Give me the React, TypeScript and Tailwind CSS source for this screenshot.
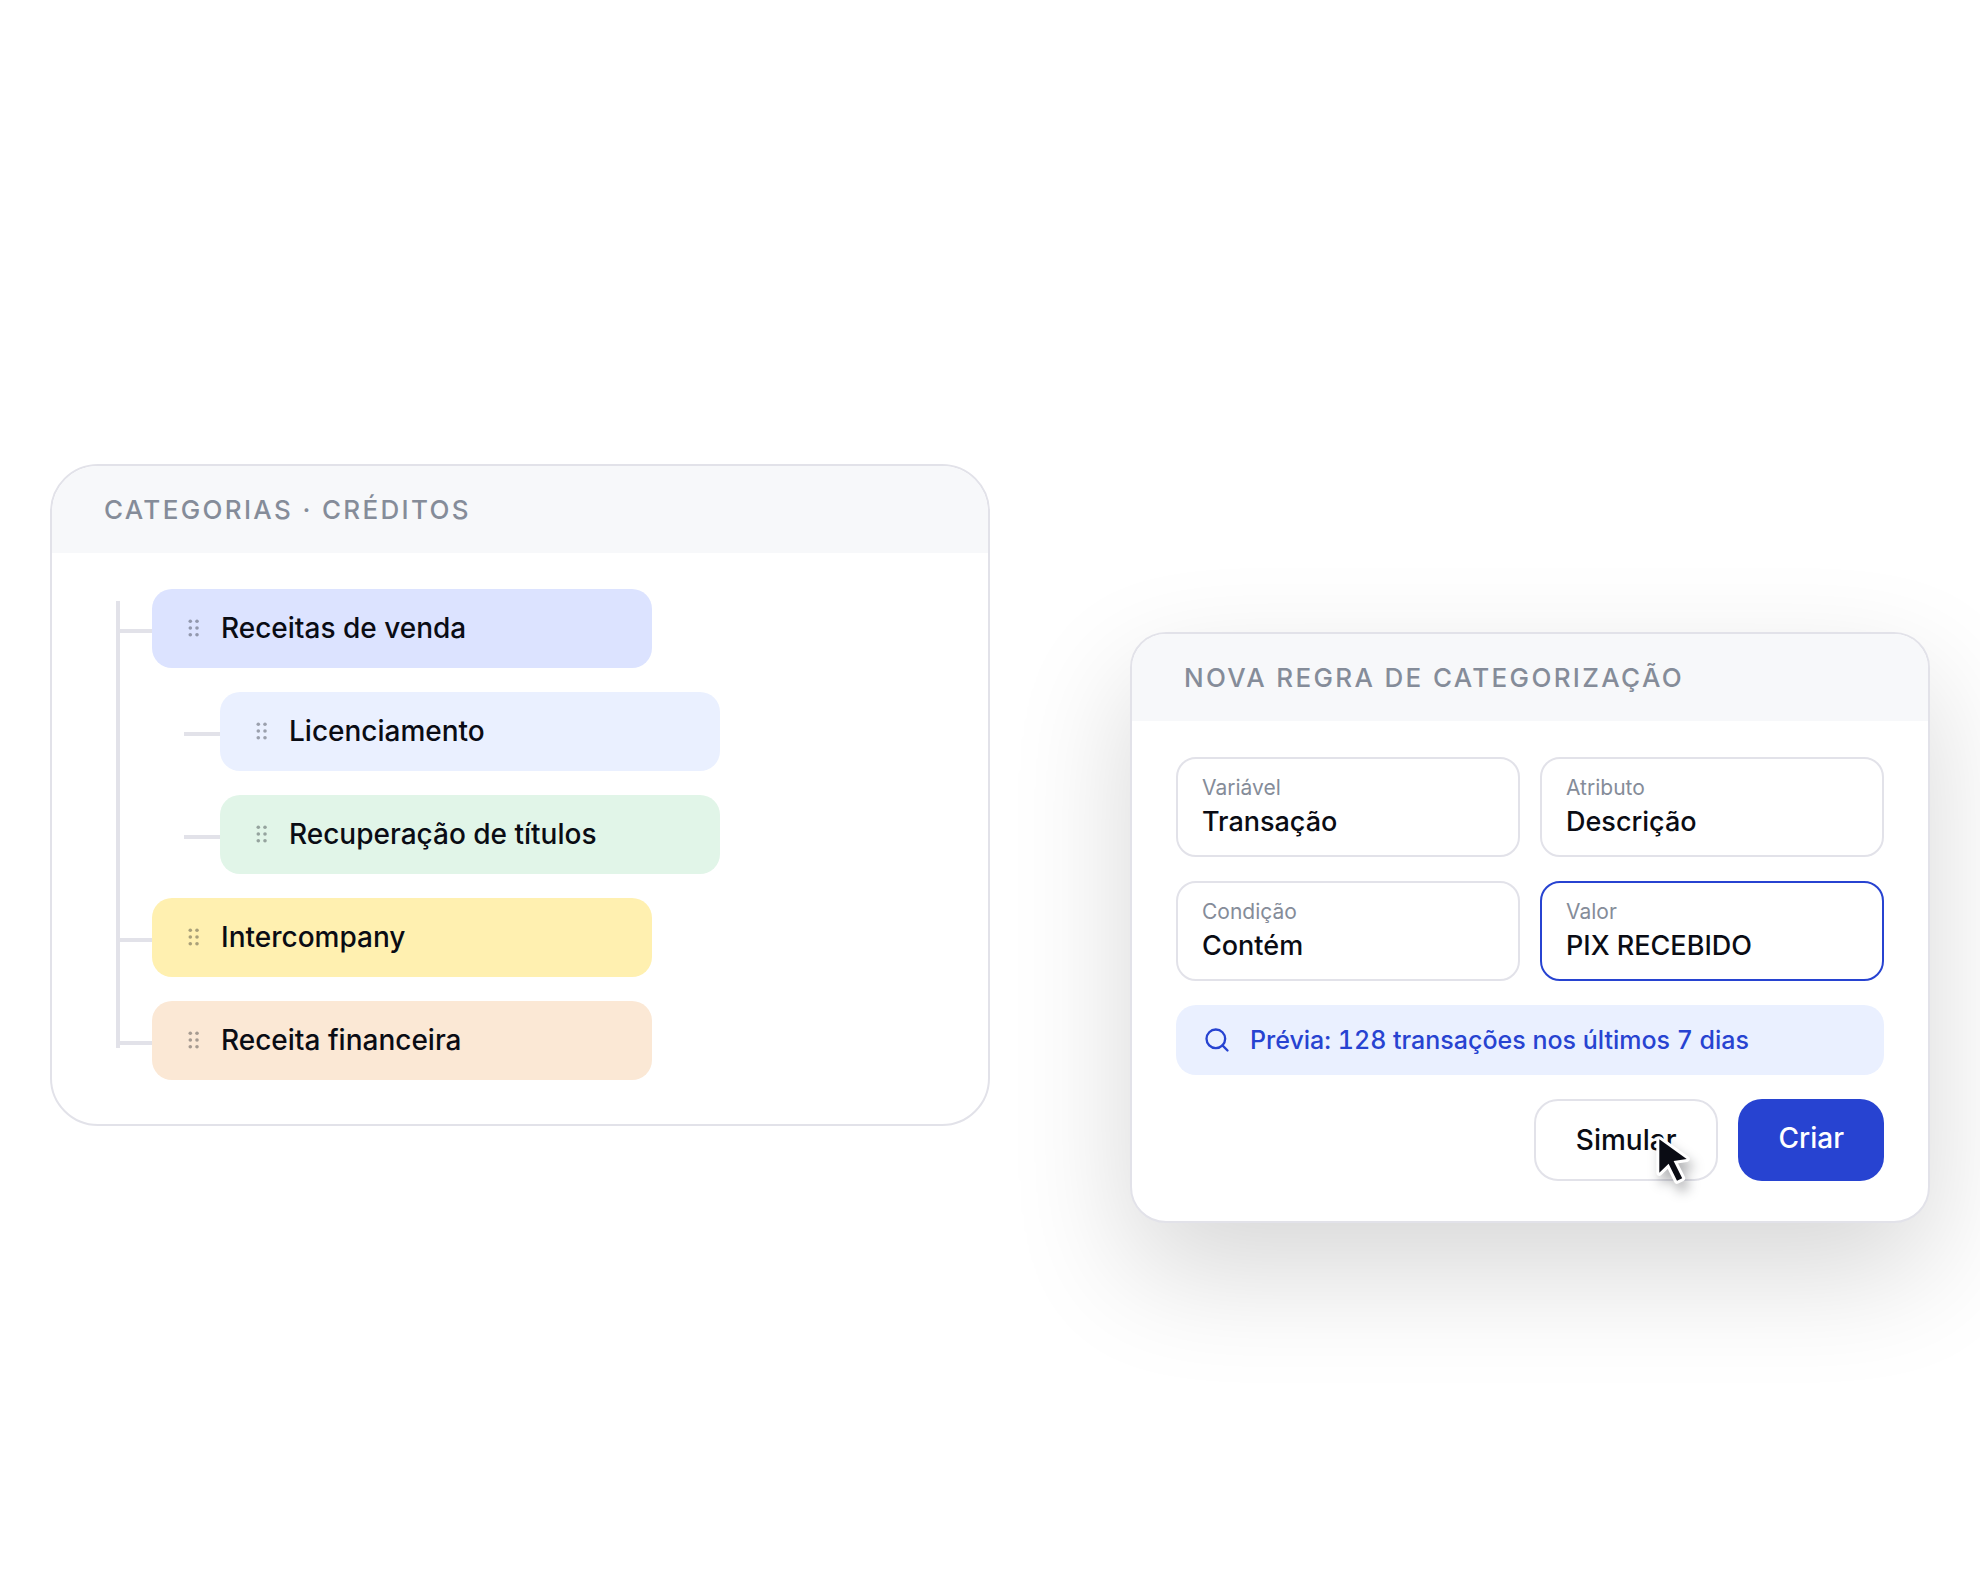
import React, { useState } from 'react';
import { Search } from 'lucide-react';
import { clsx } from 'clsx';

type Category = {
  name: string;
  color: string;
  children?: Category[];
};

const categories: Category[] = [
  {
    name: 'Receitas de venda',
    color: 'bg-[#dce3ff]',
    children: [
      { name: 'Licenciamento', color: 'bg-[#eaf0ff]' },
      { name: 'Recuperação de títulos', color: 'bg-[#e1f5e8]' },
    ],
  },
  { name: 'Intercompany', color: 'bg-[#fff0b0]' },
  { name: 'Receita financeira', color: 'bg-[#fbe8d5]' },
];

const fields = [
  { id: 'variavel', label: 'Variável', value: 'Transação' },
  { id: 'atributo', label: 'Atributo', value: 'Descrição' },
  { id: 'condicao', label: 'Condição', value: 'Contém' },
  { id: 'valor', label: 'Valor', value: 'PIX RECEBIDO', active: true },
];

const GripIcon = () => (
  <svg viewBox="0 0 28 28" className="size-7 shrink-0 fill-[#0a0c14]/35" aria-hidden="true">
    {[7.3, 14, 20.7].map((y) => (
      <React.Fragment key={y}>
        <circle cx="10.3" cy={y} r="1.8" />
        <circle cx="17" cy={y} r="1.8" />
      </React.Fragment>
    ))}
  </svg>
);

const CursorIcon = () => (
  <svg
    viewBox="0 0 48 60"
    className="pointer-events-none absolute top-7 left-28 h-[60px] w-12 drop-shadow-[4px_8px_6px_rgba(10,12,20,0.3)]"
    aria-hidden="true"
  >
    <path
      d="M13.3 12.3 40.7 32 27.6 34 36.2 51.2 31 53.8 22.6 36.8 13.3 45.8Z"
      fill="#0a0c14"
      stroke="#fff"
      strokeWidth="6"
      strokeLinejoin="round"
      paintOrder="stroke"
    />
  </svg>
);

const CardHeader = ({ title }: { title: string }) => (
  <h2 className="bg-[#f7f8fa] px-[52px] py-7 text-[26px] leading-[31px] font-medium tracking-[0.09em] text-[#858c99] uppercase">
    {title}
  </h2>
);

const CategoryItem = ({ category, nested }: { category: Category; nested?: boolean }) => (
  <li className="flex flex-col gap-6">
    <div className="flex items-center">
      <span className={clsx('mt-[5px] h-1 bg-[#e2e2e9]', nested ? 'w-9' : 'w-8')} />
      <div
        className={clsx('flex w-[500px] items-center gap-[13px] rounded-[20px] px-7 pt-[22px] pb-[23px]', category.color)}
      >
        <GripIcon />
        <span className="text-[28px] leading-[34px] font-medium">{category.name}</span>
      </div>
    </div>
    {category.children && (
      <ul className="ml-16 flex flex-col gap-6">
        {category.children.map((child) => (
          <CategoryItem key={child.name} category={child} nested />
        ))}
      </ul>
    )}
  </li>
);

export default function App() {
  const [values, setValues] = useState<Record<string, string>>(
    Object.fromEntries(fields.map((f) => [f.id, f.value]))
  );

  return (
    <main className="flex min-h-screen items-center justify-between bg-white px-[50px] font-[Inter,sans-serif] text-[#0a0c14]">
      <section className="w-1/2 overflow-hidden rounded-[48px] border-2 border-[#e2e2e9] bg-white">
        <CardHeader title="Categorias · Créditos" />
        <div className="flex pt-9 pr-11 pb-11 pl-16">
          <span className="mt-3 mb-8 w-1 shrink-0 bg-[#e2e2e9]" />
          <ul className="flex flex-col gap-6">
            {categories.map((category) => (
              <CategoryItem key={category.name} category={category} />
            ))}
          </ul>
        </div>
      </section>

      <section className="mt-[265px] w-[800px] overflow-hidden rounded-[36px] border-2 border-[#e2e2e9] bg-white shadow-[0_48px_120px_rgba(0,0,0,0.16)]">
        <CardHeader title="Nova regra de categorização" />
        <form className="flex flex-col gap-6 px-11 pt-9 pb-10" onSubmit={(e) => e.preventDefault()}>
          <div className="grid grid-cols-2 gap-x-5 gap-y-6">
            {fields.map((field) => (
              <div
                key={field.id}
                className={clsx(
                  'flex h-[100px] flex-col gap-[5px] rounded-[20px] border-2 px-6 py-4',
                  field.active ? 'border-[#2743d1]' : 'border-[#e2e2e9]'
                )}
              >
                <label htmlFor={field.id} className="text-[21px] leading-[25px] text-[#858c99]">
                  {field.label}
                </label>
                <input
                  id={field.id}
                  type="text"
                  value={values[field.id]}
                  onChange={(e) => setValues({ ...values, [field.id]: e.target.value })}
                  className="h-[34px] w-full bg-transparent text-[27px] leading-[34px] font-medium outline-none"
                />
              </div>
            ))}
          </div>

          <div className="flex h-[70px] items-center gap-[19px] rounded-[20px] bg-[#eaf0ff] px-[27px] text-[#2743d1]">
            <Search className="size-7 shrink-0" strokeWidth={2} />
            <p className="text-[25px] leading-[30px] font-medium tabular-nums">
              Prévia: 128 transações nos últimos 7 dias
            </p>
          </div>

          <div className="flex justify-end gap-5">
            <div className="relative">
              <button
                type="button"
                className="rounded-3xl border-2 border-[#e2e2e9] bg-white px-10 py-[22px] text-[28px] leading-[34px] font-medium"
              >
                Simular
              </button>
              <CursorIcon />
            </div>
            <button
              type="submit"
              className="flex items-start rounded-3xl bg-[#2743d1] px-10 py-[22px] text-[28px] leading-[34px] font-medium text-white"
            >
              Criar
            </button>
          </div>
        </form>
      </section>
    </main>
  );
}
